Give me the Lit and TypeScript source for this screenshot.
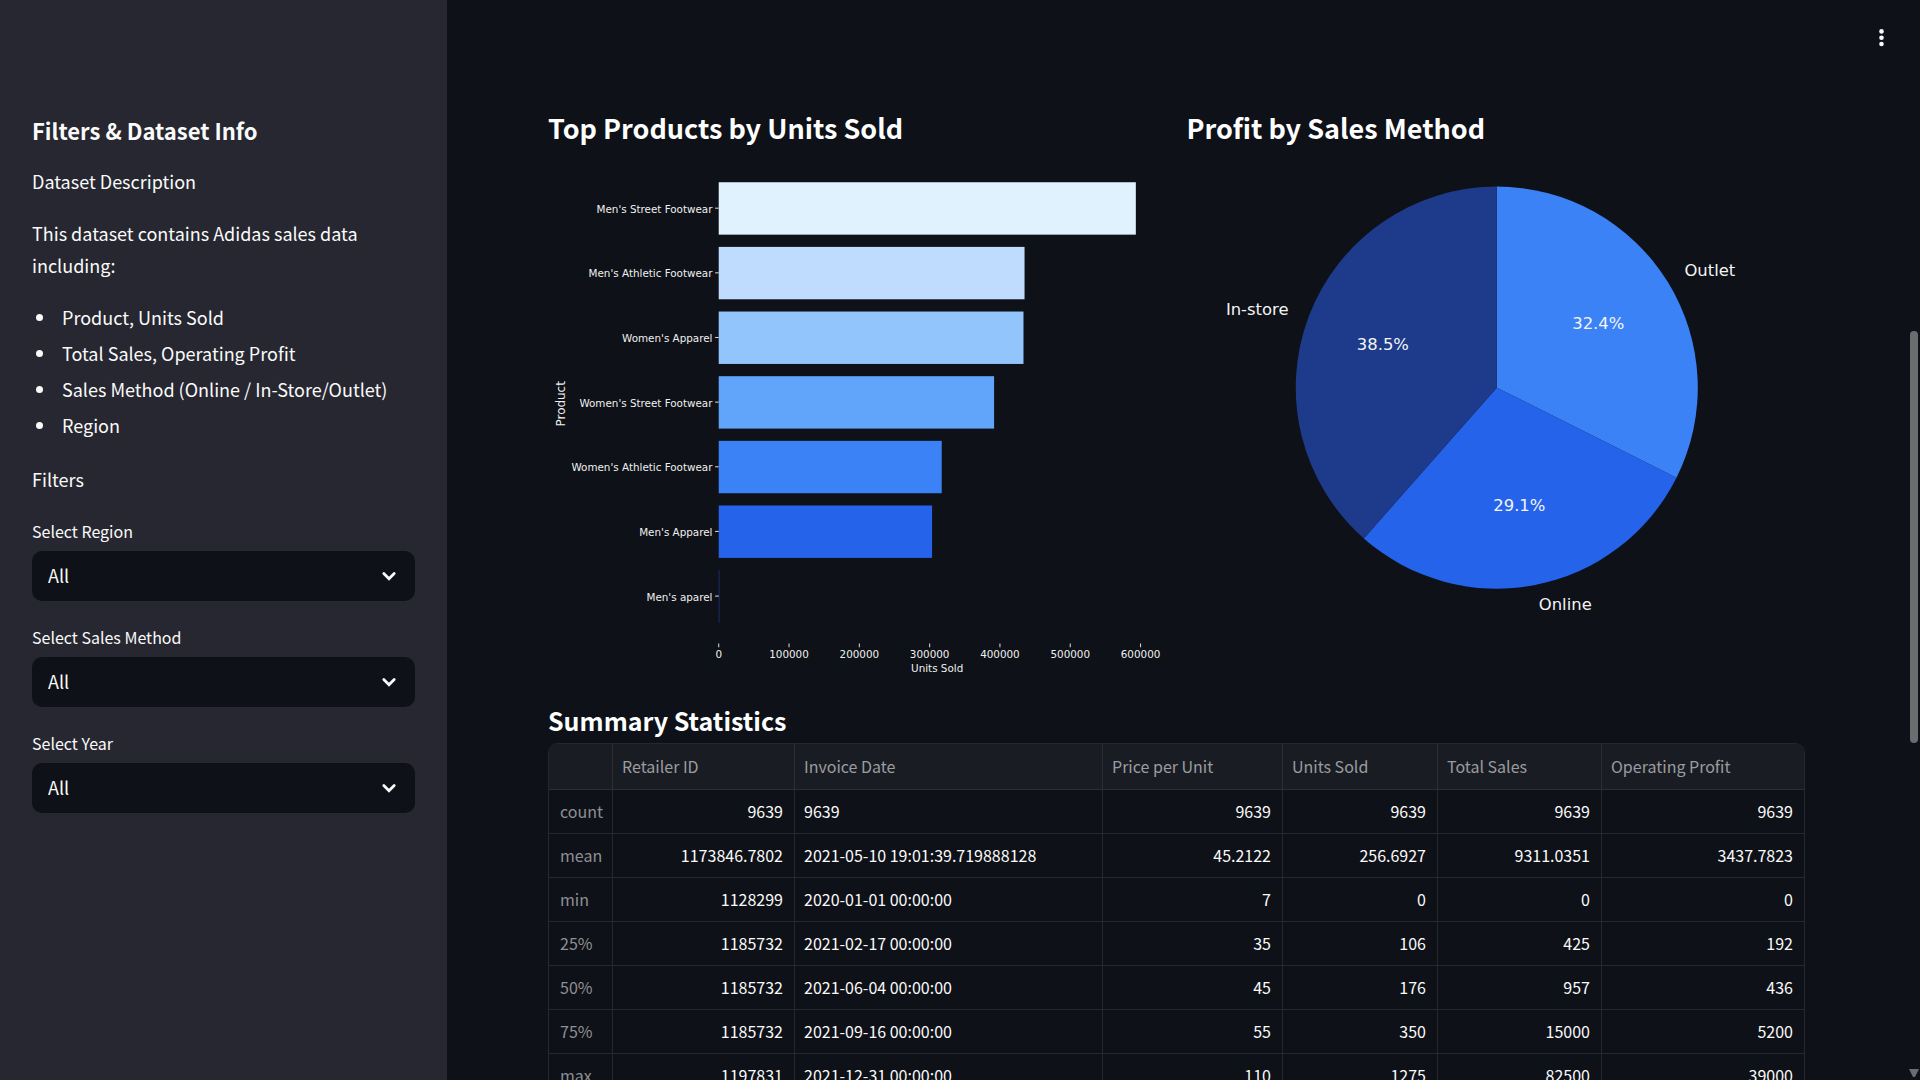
import { LitElement, html, svg, css } from "lit";
import { customElement, property } from "lit/decorators.js";

const PRODUCTS = [
  { name: "Men's Street Footwear", units: 593300, color: "#e0f2fe" },
  { name: "Men's Athletic Footwear", units: 435000, color: "#bfdbfe" },
  { name: "Women's Apparel", units: 433500, color: "#93c5fd" },
  { name: "Women's Street Footwear", units: 391700, color: "#60a5fa" },
  { name: "Women's Athletic Footwear", units: 317200, color: "#3b82f6" },
  { name: "Men's Apparel", units: 303500, color: "#2563eb" },
  { name: "Men's aparel", units: 1000, color: "#1e3a8a" },
];

const METHODS = [
  { name: "Outlet", share: 32.4, color: "#3b82f6", lx: 485, ly: 111, anchor: "start", px: 401, py: 163 },
  { name: "Online", share: 29.1, color: "#2563eb", lx: 343, ly: 437, anchor: "start", px: 324, py: 340 },
  { name: "In-store", share: 38.5, color: "#1e3a8a", lx: 99, ly: 149, anchor: "end", px: 191, py: 183 },
];

const COLUMNS = ["", "Retailer ID", "Invoice Date", "Price per Unit", "Units Sold", "Total Sales", "Operating Profit"];

const ROWS = [
  ["count", "9639", "9639", "9639", "9639", "9639", "9639"],
  ["mean", "1173846.7802", "2021-05-10 19:01:39.719888128", "45.2122", "256.6927", "9311.0351", "3437.7823"],
  ["min", "1128299", "2020-01-01 00:00:00", "7", "0", "0", "0"],
  ["25%", "1185732", "2021-02-17 00:00:00", "35", "106", "425", "192"],
  ["50%", "1185732", "2021-06-04 00:00:00", "45", "176", "957", "436"],
  ["75%", "1185732", "2021-09-16 00:00:00", "55", "350", "15000", "5200"],
  ["max", "1197831", "2021-12-31 00:00:00", "110", "1275", "82500", "39000"],
];

@customElement("bar-chart")
class BarChart extends LitElement {
  static styles = css`
    :host { display: block; }
    .chart { display: block; width: 100%; height: auto; font-family: "DejaVu Sans", sans-serif; fill: #f0f0f0; }
    .tick { font-size: 20px; }
    .axis { font-size: 23px; }
    .mark { stroke: #d8d8d8; stroke-width: 2; }
  `;
  render() {
    const left = 329;
    const perUnit = 813 / 600000;
    return html`
      <svg class="chart" viewBox="0 0 1192 1014" role="img" aria-label="Top Products by Units Sold">
        ${PRODUCTS.map((p, i) => {
          const y = 39 + i * 124.6;
          return svg`
            <rect x=${left} y=${y} width=${p.units * perUnit} height="101" fill=${p.color}></rect>
            <line class="mark" x1="322" x2=${left} y1=${y + 50} y2=${y + 50}></line>
            <text class="tick" x="317" y=${y + 59} text-anchor="end">${p.name}</text>`;
        })}
        ${[0, 1, 2, 3, 4, 5, 6].map((n) => {
          const x = left + n * 100000 * perUnit;
          return svg`
            <line class="mark" x1=${x} x2=${x} y1="928" y2="935"></line>
            <text class="tick" x=${x} y="956" text-anchor="middle">${n * 100000}</text>`;
        })}
        <text class="tick" x="750" y="983" text-anchor="middle">Units Sold</text>
        <text class="axis" transform="translate(32 466) rotate(-90)" text-anchor="middle">Product</text>
      </svg>
    `;
  }
}

@customElement("pie-chart")
class PieChart extends LitElement {
  static styles = css`
    :host { display: block; }
    .chart { display: block; width: 100%; height: auto; font-family: "DejaVu Sans", sans-serif; font-size: 16px; fill: #f4f4f4; }
  `;
  render() {
    const cx = 302;
    const cy = 220;
    const r = 196;
    let start = 0;
    const slices = METHODS.map((m) => {
      const end = start + (m.share / 100) * 2 * Math.PI;
      const large = end - start > Math.PI ? 1 : 0;
      const d = `M${cx} ${cy}L${cx + r * Math.sin(start)} ${cy - r * Math.cos(start)}A${r} ${r} 0 ${large} 1 ${cx + r * Math.sin(end)} ${cy - r * Math.cos(end)}Z`;
      start = end;
      return svg`
        <path d=${d} fill=${m.color}></path>
        <text x=${m.px} y=${m.py} text-anchor="middle">${m.share.toFixed(1)}%</text>
        <text x=${m.lx} y=${m.ly} text-anchor=${m.anchor}>${m.name}</text>`;
    });
    return html`<svg class="chart" viewBox="0 0 603 480" role="img" aria-label="Profit by Sales Method">${slices}</svg>`;
  }
}

@customElement("filter-select")
class FilterSelect extends LitElement {
  @property() label = "";
  static styles = css`
    :host { display: flex; flex-direction: column; gap: 8px; }
    .label { font-size: 16px; line-height: 24px; }
    .field { display: grid; align-items: center; }
    .select, .chevron { grid-area: 1 / 1; }
    .select {
      appearance: none; width: 100%; height: 50px; padding: 0 48px 2px 16px;
      border: 0; border-radius: 10px; background: #0e1117; color: #fafafa;
      font-family: inherit; font-size: 18px; cursor: pointer;
    }
    .chevron { justify-self: end; width: 20px; height: 20px; margin-right: 16px; pointer-events: none; }
  `;
  render() {
    return html`
      <label class="label" for="choice">${this.label}</label>
      <div class="field">
        <select class="select" id="choice"><option>All</option></select>
        <svg class="chevron" viewBox="0 0 20 20" aria-hidden="true">
          <path d="M4.8 7.6L10 12.8L15.2 7.6" fill="none" stroke="#fafafa" stroke-width="2.8" stroke-linecap="round"></path>
        </svg>
      </div>
    `;
  }
}

@customElement("summary-table")
class SummaryTable extends LitElement {
  static styles = css`
    :host { display: block; }
    .table {
      width: 100%; table-layout: fixed; border-collapse: separate; border-spacing: 0;
      border: 1px solid #26282e; border-radius: 10px; overflow: hidden;
      font-size: 16px; line-height: 24px; color: #fafafa;
    }
    .c0 { width: 64px; }
    .c1 { width: 182px; }
    .c2 { width: 308px; }
    .c3 { width: 180px; }
    .c4 { width: 155px; }
    .c5 { width: 164px; }
    .head, .index, .cell {
      box-sizing: border-box; height: 44px; padding: 0 11px 2px 9px; font-weight: 400; white-space: nowrap;
      border-right: 1px solid #26282e; border-bottom: 1px solid #26282e;
    }
    .head { height: 46px; background: #1a1c24; color: #9b9c9f; text-align: left; border-color: #2c2e36; }
    .index { color: #8e8f94; text-align: left; padding: 0 9px 2px 11px; }
    .cell { text-align: right; }
    .date { text-align: left; }
    .head:last-child, .cell:last-child { border-right: 0; }
  `;
  render() {
    return html`
      <table class="table">
        <colgroup>${COLUMNS.map((_, i) => html`<col class="c${i}">`)}</colgroup>
        <thead><tr>${COLUMNS.map((c) => html`<th class="head" scope="col">${c}</th>`)}</tr></thead>
        <tbody>
          ${ROWS.map(([name, ...cells]) => html`
            <tr>
              <th class="index" scope="row">${name}</th>
              ${cells.map((v, i) => html`<td class="cell ${i === 1 ? "date" : ""}">${v}</td>`)}
            </tr>`)}
        </tbody>
      </table>
    `;
  }
}

@customElement("app-root")
class AppRoot extends LitElement {
  static styles = css`
    :host {
      display: flex; position: relative; height: 100vh; overflow: hidden;
      background: #0e1117; color: #fafafa;
      font-family: "Source Sans Pro", "Noto Sans CJK SC", "Noto Sans", sans-serif;
      font-size: 18px; line-height: 32px;
    }
    .sidebar {
      box-sizing: border-box; flex: 0 0 447px; background: #262730;
      padding: 115px 32px 0; display: flex; flex-direction: column; gap: 24px;
    }
    .info { display: flex; flex-direction: column; gap: 20px; }
    .title { margin: 0; font-size: 22px; line-height: 30px; font-weight: 600; }
    .text { margin: 0; }
    .list { margin: 0; padding: 0 0 2px; list-style: none; display: flex; flex-direction: column; gap: 4px; }
    .item { display: flex; align-items: center; gap: 19px; }
    .item::before { content: ""; width: 7px; height: 7px; margin-left: 4px; border-radius: 50%; background: #fafafa; }
    .main { flex: 1; min-width: 0; padding: 110px 115px 0 101px; }
    .columns { display: grid; grid-template-columns: 1fr 1fr; gap: 20px; margin-bottom: 15px; }
    .panel { display: flex; flex-direction: column; gap: 16px; min-width: 0; }
    .heading { margin: 0; font-size: 27px; line-height: 36px; font-weight: 700; color: #fff; }
    .subheading { margin: 0 0 6px; font-size: 25px; line-height: 34px; font-weight: 700; color: #fff; }
    .menu {
      position: absolute; top: 23px; right: 24px; width: 30px; height: 30px; padding: 0;
      border: 0; background: none; cursor: pointer;
    }
    .dots { display: block; width: 30px; height: 30px; }
    .scrollbar { position: absolute; top: 0; right: 0; width: 12px; height: 100%; }
    .thumb { position: absolute; top: 331px; left: 2px; width: 8px; height: 412px; border-radius: 4px; background: #6b6c70; }
    .arrow {
      position: absolute; bottom: 3px; left: 1px; width: 10px; height: 8px;
      background: #6b6c70; clip-path: polygon(0 0, 100% 0, 60% 100%, 40% 100%);
    }
  `;
  render() {
    return html`
      <aside class="sidebar">
        <div class="info">
          <h2 class="title">Filters &amp; Dataset Info</h2>
          <p class="text">Dataset Description</p>
          <p class="text">This dataset contains Adidas sales data including:</p>
          <ul class="list">
            <li class="item">Product, Units Sold</li>
            <li class="item">Total Sales, Operating Profit</li>
            <li class="item">Sales Method (Online / In-Store/Outlet)</li>
            <li class="item">Region</li>
          </ul>
          <p class="text">Filters</p>
        </div>
        <filter-select label="Select Region"></filter-select>
        <filter-select label="Select Sales Method"></filter-select>
        <filter-select label="Select Year"></filter-select>
      </aside>
      <main class="main">
        <div class="columns">
          <section class="panel">
            <h2 class="heading">Top Products by Units Sold</h2>
            <bar-chart></bar-chart>
          </section>
          <section class="panel">
            <h2 class="heading">Profit by Sales Method</h2>
            <pie-chart></pie-chart>
          </section>
        </div>
        <h3 class="subheading">Summary Statistics</h3>
        <summary-table></summary-table>
      </main>
      <button class="menu" aria-label="Main menu">
        <svg class="dots" viewBox="0 0 30 30" aria-hidden="true" fill="#fafafa">
          <circle cx="15.5" cy="8.4" r="2.3"></circle>
          <circle cx="15.5" cy="14.7" r="2.3"></circle>
          <circle cx="15.5" cy="21" r="2.3"></circle>
        </svg>
      </button>
      <div class="scrollbar" aria-hidden="true">
        <div class="thumb"></div>
        <div class="arrow"></div>
      </div>
    `;
  }
}
